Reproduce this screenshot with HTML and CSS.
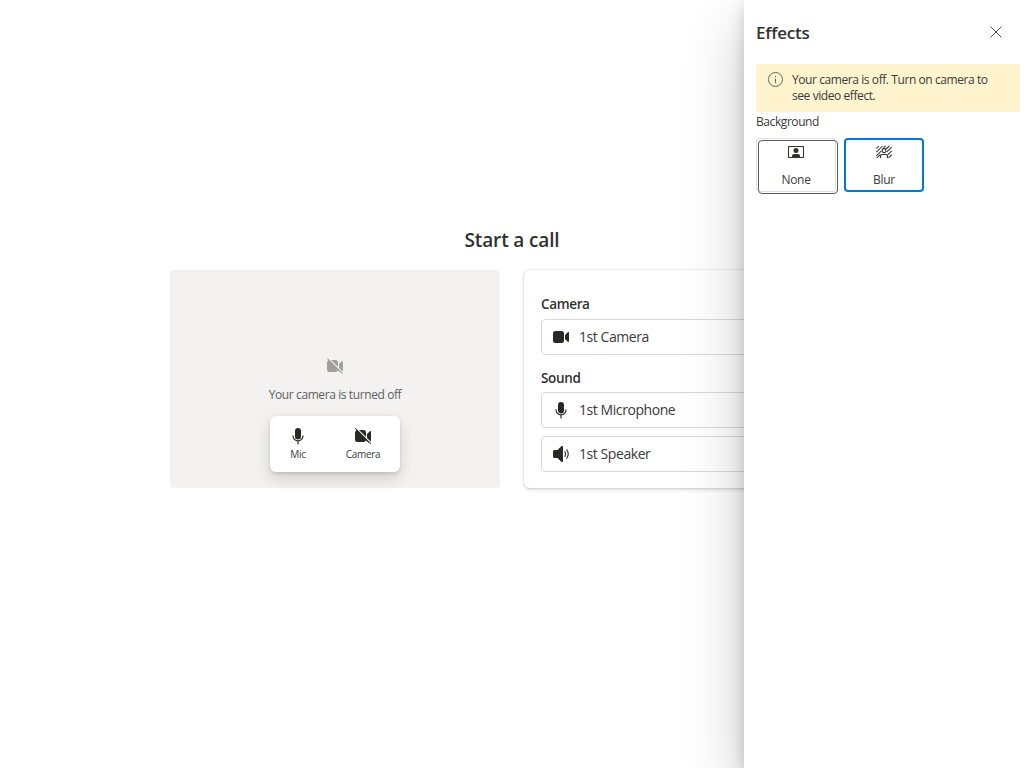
FILE: index.html
```html
<!DOCTYPE html>
<html lang="en">
<head>
<meta charset="utf-8">
<title>Start a call</title>
<link rel="stylesheet" href="styles.css">
</head>
<body>
<svg width="0" height="0" class="sprite" aria-hidden="true">
  <symbol id="video" viewBox="0 0 20 20"><path d="M4.500 4A2.500 2.500 0 0 0 2 6.500v7A2.500 2.500 0 0 0 4.500 16h6a2.500 2.500 0 0 0 2.500-2.500v-7A2.500 2.500 0 0 0 10.500 4zM14 7.900v4.200l2.800 2.700c.5.5 1.200.1 1.200-.5V5.700c0-.6-.7-1-1.200-.5z"/></symbol>
  <symbol id="video-off" viewBox="0 0 20 20"><path d="M2.850 2.150a.5.5 0 0 0-.7.700L3.500 4.200A2.500 2.500 0 0 0 2 6.500v7A2.500 2.500 0 0 0 4.500 16h6a2.500 2.500 0 0 0 2.300-1.500l4.350 3.350a.5.5 0 0 0 .7-.7zM6.100 4 13 10.900V6.500A2.500 2.500 0 0 0 10.500 4zM14 7.900v4l3.700 3.600q.3-.3.3-1.200V5.700c0-.6-.7-1-1.200-.5z"/></symbol>
  <symbol id="mic" viewBox="0 0 20 20"><rect x="7" y="2" width="6" height="11.500" rx="3"/><path d="M5 9.800a5 5 0 0 0 10 0M10 15v3" fill="none" stroke="currentColor" stroke-width="1.200" stroke-linecap="round"/></symbol>
  <symbol id="speaker" viewBox="0 0 20 20"><path d="M10.300 2.300c.7-.6 1.700-.2 1.700.7v14c0 .9-1 1.300-1.700.7L6.500 14H3.500A1.500 1.500 0 0 1 2 12.500v-5A1.500 1.500 0 0 1 3.500 6h3z"/><path d="M13.900 7.500q1.300 2.500 0 5M15.800 5.700q2.900 4.300 0 8.600" fill="none" stroke="currentColor" stroke-width="1.100" stroke-linecap="round"/></symbol>
</svg>

<main class="page">
  <h1 class="title">Start a call</h1>
  <div class="columns">
    <section class="preview">
      <svg class="icon preview-icon"><use href="#video-off"/></svg>
      <p class="preview-text">Your camera is turned off</p>
      <div class="controls">
        <button class="control"><svg class="icon"><use href="#mic"/></svg><span>Mic</span></button>
        <button class="control control-camera"><svg class="icon"><use href="#video-off"/></svg><span>Camera</span></button>
      </div>
    </section>
    <section class="devices">
      <h2 class="label">Camera</h2>
      <div class="select"><svg class="icon"><use href="#video"/></svg><span>1st Camera</span></div>
      <h2 class="label label-sound">Sound</h2>
      <div class="select"><svg class="icon"><use href="#mic"/></svg><span>1st Microphone</span></div>
      <div class="select select-next"><svg class="icon"><use href="#speaker"/></svg><span>1st Speaker</span></div>
    </section>
  </div>
</main>

<aside class="panel">
  <header class="panel-header">
    <h2 class="panel-title">Effects</h2>
    <button class="close" aria-label="Close"><svg width="12" height="12" viewBox="0 0 12 12"><path d="M.7.7l10.600 10.600M11.300.7.7 11.300" stroke="#504e4c" fill="none"/></svg></button>
  </header>
  <div class="warning">
    <svg class="info" width="16" height="16" viewBox="0 0 16 16"><circle cx="7.500" cy="7.500" r="7" fill="none" stroke="#6a6558"/><path d="M7.500 6.500v4.500M7.500 4v1.100" stroke="#6a6558"/></svg>
    <p class="warning-text">Your camera is off. Turn on camera to<br>see video effect.</p>
  </div>
  <p class="section">Background</p>
  <div class="options">
    <button class="option focused">
      <svg width="16" height="16" viewBox="0 0 16 16"><path d="M1 2.500h14q.5 0 .5.500v10q0 .5-.5.500H1q-.5 0-.5-.500V3q0-.5.500-.500z" fill="none" stroke="#323130" stroke-width="1.100"/><circle cx="8" cy="6.500" r="2.500"/><path d="M4 13v-1a2 2 0 0 1 2-2h4a2 2 0 0 1 2 2v1z"/></svg>
      <span>None</span>
    </button>
    <button class="option selected">
      <svg class="outline" width="16" height="16" viewBox="0 0 16 16" stroke="#323130" stroke-width="1.050"><path d="M.3 4.500 2.800 2M.3 8.200 6.500 2M.3 11.900 5.400 6.800M.8 14 4.200 10.600M7.500 3.900 9.600 1.900M10.200 5 13.300 2M10.600 8.200l5.100-5.100M11.800 10.800l3.900-3.900M12.600 13.800l3.100-3.100"/><rect x="6.300" y="4.600" width="3.500" height="4" rx="1.300"/><path d="M4.500 14v-2q0-1.500 1.500-1.500h4q1.500 0 1.500 1.500v2" stroke-width="1.200"/></svg>
      <span>Blur</span>
    </button>
  </div>
</aside>
</body>
</html>
```
FILE: styles.css
```css
*, *::after { box-sizing: border-box; }
body {
  margin: 0;
  height: 768px;
  overflow: hidden;
  background: #fff;
  color: #3b3a39;
  font-family: "Open Sans", "Noto Sans", sans-serif;
}
h1, h2, p { margin: 0; }
h1, h2 { color: #323130; }
button { font: inherit; color: inherit; border: 0; padding: 0; background: none; }
svg { display: block; flex: none; fill: #323130; }
span { white-space: nowrap; }
.sprite { position: absolute; }
.icon { width: 20px; height: 20px; fill: currentColor; color: #292827; }
.outline { fill: none; }
.page { width: 684px; margin: 0 auto; padding-top: 226px; }
.title { font-size: 19px; line-height: 28px; font-weight: 600; text-align: center; letter-spacing: -.15px; }
.columns { display: flex; gap: 24px; margin-top: 16px; }
.preview {
  width: 330px; height: 218px; padding-top: 86px; border-radius: 4px;
  display: flex; flex-direction: column; align-items: center; background: #f3f2f1;
}
.preview-icon { color: #a19f9d; }
.preview-text { margin-top: 10px; font-size: 12px; line-height: 18px; color: #605e5c; letter-spacing: -.4px; white-space: nowrap; }
.controls {
  display: flex; width: 130px; height: 56px; margin-top: 12px; border-radius: 6px; background: #fff;
  box-shadow: 0 6.4px 14.4px rgba(0,0,0,.132), 0 1.2px 3.6px rgba(0,0,0,.108);
}
.control { width: 56px; padding-top: 10px; display: flex; flex-direction: column; align-items: center; font-size: 10px; line-height: 17px; letter-spacing: -.3px; }
.control-camera { width: 74px; }
.devices {
  width: 330px; height: 218px; padding: 24px 17px 16px; border-radius: 6px; background: #fff;
  box-shadow: 0 1.6px 3.6px rgba(0,0,0,.132), 0 0 2px rgba(0,0,0,.2);
}
.label { height: 25px; font-size: 13.500px; line-height: 20px; font-weight: 600; letter-spacing: -.35px; }
.label-sound { margin-top: 13px; height: 24px; }
.select { height: 36px; padding: 0 0 1px 9px; display: flex; align-items: center; gap: 8px; border: 1px solid #d9d8d7; border-radius: 4px; font-size: 14px; letter-spacing: -.43px; }
.select-next { margin-top: 8px; }
.panel {
  position: absolute; top: 0; right: 0; width: 280px; height: 768px; padding: 0 4px 0 12px; background: #fff;
  box-shadow: 0 25.6px 57.6px rgba(0,0,0,.22), 0 4.8px 14.4px rgba(0,0,0,.18);
}
.panel-header { height: 64px; padding: 0 18px 0 0; display: flex; align-items: center; justify-content: space-between; }
.panel-title { padding-top: 2px; font-size: 17px; line-height: 24px; font-weight: 600; letter-spacing: -.2px; }
.warning { height: 48px; display: flex; gap: 8px; padding: 8px 0 8px 12px; background: #fff4ce; }
.warning-text { font-size: 12px; line-height: 16px; letter-spacing: -.42px; white-space: nowrap; }
.section { padding-top: 1px; font-size: 12px; line-height: 18px; letter-spacing: -.42px; }
.options { display: flex; gap: 8px; margin-top: 7px; }
.option { position: relative; width: 80px; height: 54px; padding-top: 6px; display: flex; flex-direction: column; align-items: center; gap: 11px; font-size: 12px; line-height: 18px; letter-spacing: -.3px; border-radius: 4px; box-shadow: inset 0 0 0 1px #e1dfdd; }
.focused::after { content: ""; position: absolute; left: 2px; top: 2px; width: 80px; height: 54px; border: 1px solid #605e5c; border-radius: 4px; }
.selected { box-shadow: inset 0 0 0 2px #0078d4; }
```
